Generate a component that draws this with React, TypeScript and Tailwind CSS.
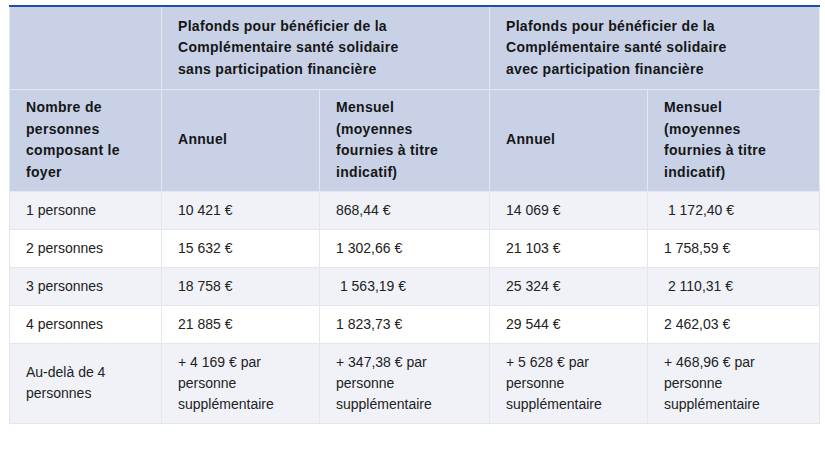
const rows = [
  ["1 personne", "10 421 €", "868,44 €", "14 069 €", "\u00a01 172,40 €"],
  ["2 personnes", "15 632 €", "1 302,66 €", "21 103 €", "1 758,59 €"],
  ["3 personnes", "18 758 €", "\u00a01 563,19 €", "25 324 €", "\u00a02 110,31 €"],
  ["4 personnes", "21 885 €", "1 823,73 €", "29 544 €", "2 462,03 €"],
  [
    "Au-delà de 4 personnes",
    "+ 4 169 € par personne supplémentaire",
    "+ 347,38 € par personne supplémentaire",
    "+ 5 628 € par personne supplémentaire",
    "+ 468,96 € par personne supplémentaire",
  ],
];

const th =
  "border border-[#e4e8f1] bg-[#c8d1e6] px-4 text-left align-middle font-bold leading-[21.5px] tracking-[0.3px] text-[#161616]";
const th1 = th + " py-[8.5px]";
const th2 = th + " py-[7.5px]";
const td = "border border-[#e2e6ef] px-4 py-2 align-middle leading-[21px] text-[#222]";

function Mensuel() {
  return (
    <>
      Mensuel
      <br />
      (moyennes
      <br />
      fournies à titre
      <br />
      indicatif)
    </>
  );
}

export default function App() {
  return (
    <div
      className="min-h-screen bg-white pl-[9px] pt-[5px]"
      style={{ fontFamily: '"Liberation Sans", Arial, sans-serif' }}
    >
      <table className="w-[810px] table-fixed border-collapse text-[14px]">
        <colgroup>
          <col className="w-[152px]" />
          <col className="w-[158px]" />
          <col className="w-[170px]" />
          <col className="w-[158px]" />
          <col className="w-[172px]" />
        </colgroup>
        <thead>
          <tr className="border-t-2 border-[#1f4ea3]">
            <th className={th1}></th>
            <th colSpan={2} className={th1}>
              Plafonds pour bénéficier de la
              <br />
              Complémentaire santé solidaire
              <br />
              sans participation financière
            </th>
            <th colSpan={2} className={th1}>
              Plafonds pour bénéficier de la
              <br />
              Complémentaire santé solidaire
              <br />
              avec participation financière
            </th>
          </tr>
          <tr>
            <th className={th2}>Nombre de personnes composant le foyer</th>
            <th className={th2}>Annuel</th>
            <th className={th2}>
              <Mensuel />
            </th>
            <th className={th2}>Annuel</th>
            <th className={th2}>
              <Mensuel />
            </th>
          </tr>
        </thead>
        <tbody>
          {rows.map((r, i) => (
            <tr key={i} className={i % 2 === 0 ? "bg-[#f0f2f8]" : "bg-white"}>
              {r.map((c, j) => (
                <td key={j} className={td}>
                  {c}
                </td>
              ))}
            </tr>
          ))}
        </tbody>
      </table>
    </div>
  );
}
